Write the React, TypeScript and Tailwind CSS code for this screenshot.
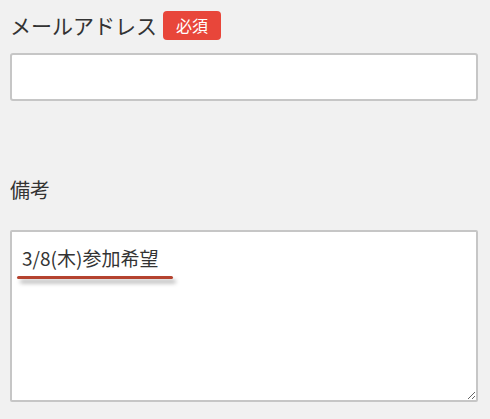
import React from 'react';

const font = { fontFamily: '"Noto Sans CJK JP", "Noto Sans", sans-serif' };

export default function App() {
  return (
    <div className="w-[490px] h-[419px] bg-[#f1f1f1] overflow-hidden" style={font}>
      <div className="px-[10px] pt-[9px]">
        <div className="flex items-center gap-[6px] h-[32px]">
          <span className="text-[21px] text-[#333] leading-none">メールアドレス</span>
          <span className="bg-[#e8463a] text-white text-[16px] leading-none rounded-[4px] w-[58px] h-[29px] flex items-center justify-center">
            必須
          </span>
        </div>
        <input
          type="text"
          className="mt-[12px] block w-[468px] h-[48px] bg-white border-2 border-[#c6c6c6] rounded-[3px] outline-none"
        />
        <div className="mt-[78px] h-[22px] text-[20px] text-[#333] leading-none flex items-center">備考</div>
        <div className="relative mt-[29px]">
          <textarea
            defaultValue="3/8(木)参加希望"
            className="block w-[468px] h-[172px] bg-white border-2 border-[#c6c6c6] rounded-[2px] outline-none px-[10px] pt-[13px] text-[19px] text-[#333] leading-[26px] resize"
            style={font}
          />
          <div className="absolute left-[7px] top-[46px] w-[156px] h-[3px] bg-[#b5432f] rounded-full shadow-[3px_4px_4px_rgba(0,0,0,0.35)]" />
        </div>
      </div>
    </div>
  );
}
